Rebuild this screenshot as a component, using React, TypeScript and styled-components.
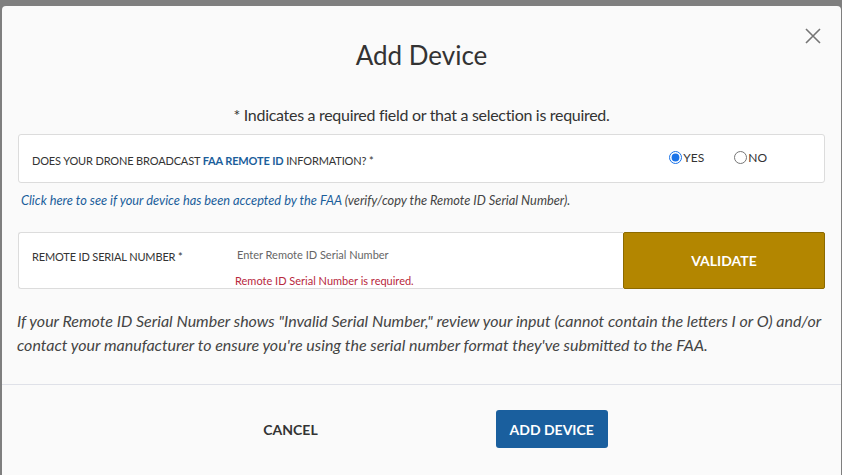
import React from "react";
import styled, { createGlobalStyle } from "styled-components";

const Global = createGlobalStyle`
  html, body { margin: 0; padding: 0; }
  body { background: #7f7f7f; font-family: Lato, "Open Sans", sans-serif; overflow: hidden; }
  * { box-sizing: border-box; }
`;

const Backdrop = styled.div`
  width: 842px;
  height: 475px;
  background: #7f7f7f;
  padding: 6px 1px 0 2px;
  overflow: hidden;
`;

const Modal = styled.div`
  background: #fafafa;
  border-radius: 4px 4px 0 0;
  height: 520px;
  position: relative;
`;

const Close = styled.button`
  position: absolute;
  right: 18px;
  top: 20px;
  width: 20px;
  height: 20px;
  padding: 0;
  border: 0;
  background: none;
  cursor: pointer;
`;

const Title = styled.h2`
  margin: 0;
  padding-top: 32px;
  text-align: center;
  font-size: 26px;
  font-weight: 400;
  color: #333;
  line-height: 34px;
`;

const Note = styled.p`
  margin: 33px 0 0;
  text-align: center;
  font-size: 16px;
  letter-spacing: -0.3px;
  color: #333;
  line-height: 20px;
`;

const Body = styled.div`
  padding: 0 16px 0 16px;
`;

const Card = styled.div`
  background: #fff;
  border: 1px solid #dcdcdc;
  border-radius: 3px;
  display: flex;
  align-items: center;
`;

const QuestionCard = styled(Card)`
  margin-top: 9px;
  height: 49px;
  padding: 0 0 0 13px;
  justify-content: space-between;
`;

const Label = styled.span<{ $pt?: number; $w?: number }>`
  font-size: 11px;
  letter-spacing: -0.15px;
  color: #333;
  text-transform: uppercase;
  padding-top: ${(p) => p.$pt ?? 0}px;
  ${(p) => (p.$w ? `width: ${p.$w}px; flex: none;` : "")}
`;

const Strong = styled.b`
  color: #1b5e9b;
  font-weight: 700;
`;

const Radios = styled.div`
  display: flex;
  align-items: center;
  gap: 30px;
  margin-right: 57px;
  padding-bottom: 2px;
`;

const RadioLabel = styled.label`
  display: flex;
  align-items: center;
  font-size: 12px;
  color: #333;
  gap: 1px;
  input {
    margin: 0;
    width: 13px;
    height: 13px;
    accent-color: #1a73e8;
  }
`;

const LinkLine = styled.p`
  margin: 9px 0 0 3px;
  font-size: 12.8px;
  font-style: italic;
  color: #444;
`;

const A = styled.a`
  color: #1b5e9b;
  text-decoration: none;
`;

const SerialRow = styled.div`
  margin-top: 24px;
  display: flex;
  height: 57px;
`;

const SerialCard = styled(Card)`
  flex: 1;
  border-right: 0;
  border-radius: 3px 0 0 3px;
  padding-left: 13px;
  align-items: flex-start;
`;

const InputCol = styled.div`
  display: flex;
  flex-direction: column;
  padding-top: 15px;
`;

const Input = styled.input`
  border: 0;
  outline: none;
  background: transparent;
  font-family: inherit;
  font-size: 11px;
  padding: 0 0 0 2px;
  width: 300px;
  color: #333;
  &::placeholder { color: #666; }
`;

const Error = styled.span`
  margin-top: 13px;
  font-size: 11px;
  color: #b8283d;
`;

const Validate = styled.button`
  width: 202px;
  background: #b38600;
  border: 1px solid #8c6a00;
  border-radius: 2px;
  color: #fff;
  font-family: inherit;
  font-weight: 700;
  font-size: 14px;
  cursor: pointer;
`;

const Help = styled.p`
  margin: 20px -4px 0 -1px;
  font-size: 16px;
  font-style: italic;
  line-height: 24px;
  color: #444;
`;

const Divider = styled.hr`
  margin: 27px 0 0;
  border: 0;
  border-top: 1px solid #dfe1e8;
`;

const Footer = styled.div`
  display: flex;
  justify-content: center;
  align-items: center;
  gap: 172px;
  padding: 25px 0 0 22px;
`;

const Cancel = styled.button`
  border: 0;
  background: none;
  font-family: inherit;
  font-weight: 700;
  font-size: 14px;
  color: #333;
  cursor: pointer;
`;

const Primary = styled.button`
  background: #1a5f9e;
  border: 0;
  border-radius: 3px;
  color: #fff;
  font-family: inherit;
  font-weight: 700;
  font-size: 14px;
  height: 38px;
  width: 112px;
  cursor: pointer;
`;

export default function App() {
  return (
    <>
      <Global />
      <Backdrop>
        <Modal>
          <Close aria-label="Close">
            <svg width="20" height="20" viewBox="0 0 20 20">
              <path d="M3 3 L17 17 M17 3 L3 17" stroke="#757575" strokeWidth="1.6" />
            </svg>
          </Close>
          <Title>Add Device</Title>
          <Note>* Indicates a required field or that a selection is required.</Note>
          <Body>
            <QuestionCard>
              <Label $pt={3}>
                Does your drone broadcast <Strong>FAA Remote ID</Strong> information? *
              </Label>
              <Radios>
                <RadioLabel>
                  <input type="radio" name="rid" defaultChecked />
                  YES
                </RadioLabel>
                <RadioLabel>
                  <input type="radio" name="rid" />
                  NO
                </RadioLabel>
              </Radios>
            </QuestionCard>
            <LinkLine>
              <A href="#">Click here to see if your device has been accepted by the FAA</A> (verify/copy the Remote ID Serial Number).
            </LinkLine>
            <SerialRow>
              <SerialCard>
                <Label $pt={17} $w={203}>Remote ID Serial Number *</Label>
                <InputCol>
                  <Input placeholder="Enter Remote ID Serial Number" />
                  <Error>Remote ID Serial Number is required.</Error>
                </InputCol>
              </SerialCard>
              <Validate>VALIDATE</Validate>
            </SerialRow>
            <Help>
              If your Remote ID Serial Number shows "Invalid Serial Number," review your input (cannot contain the letters I or O) and/or contact your manufacturer to ensure you're using the serial number format they've submitted to the FAA.
            </Help>
          </Body>
          <Divider />
          <Footer>
            <Cancel>CANCEL</Cancel>
            <Primary>ADD DEVICE</Primary>
          </Footer>
        </Modal>
      </Backdrop>
    </>
  );
}
